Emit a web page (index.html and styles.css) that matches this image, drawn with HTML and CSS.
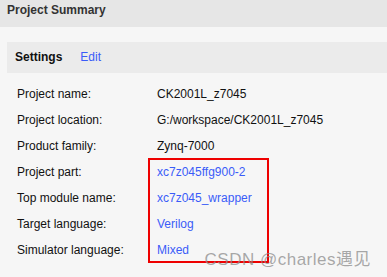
FILE: index.html
```html
<!DOCTYPE html>
<html lang="en">

<head>
    <meta charset="UTF-8">
    <title>Project Summary</title>
    <link rel="stylesheet" href="styles.css">
</head>

<body>

    <div class="title-bar">Project Summary</div>

    <div class="content">
        <div class="section-bar">
            <span class="section-title">Settings</span>
            <a class="link" href="#">Edit</a>
        </div>

        <div class="props">
            <div class="label">Project name:</div>
            <div class="value">CK2001L_z7045</div>
            <div class="label">Project location:</div>
            <div class="value">G:/workspace/CK2001L_z7045</div>
            <div class="label">Product family:</div>
            <div class="value">Zynq-7000</div>
            <div class="label">Project part:</div>
            <div class="value link">xc7z045ffg900-2</div>
            <div class="label">Top module name:</div>
            <div class="value link">xc7z045_wrapper</div>
            <div class="label">Target language:</div>
            <div class="value link">Verilog</div>
            <div class="label">Simulator language:</div>
            <div class="value link">Mixed</div>

            <div class="highlight"></div>
        </div>
    </div>

    <div class="watermark">CSDN @charles遇见</div>

</body>

</html>
```

FILE: styles.css
```css
body {
    margin: 0;
    font-family: "Liberation Sans", Arial, sans-serif;
    font-size: 12px;
    color: #111;
    background: #f6f6f6;
    position: relative;
    height: 277px;
    overflow: hidden;
}

.title-bar {
    background: #e6e6e6;
    color: #333;
    font-weight: bold;
    line-height: 20px;
    height: 27px;
    box-sizing: border-box;
    padding: 0 7px;
}

.content {
    padding: 15px 0 0 7px;
}

.section-bar {
    background: #ebebeb;
    height: 31px;
    line-height: 31px;
    padding-left: 8px;
    display: flex;
    gap: 18px;
}

.section-title {
    font-weight: bold;
    color: #111;
}

.link {
    color: #3a5cf8;
    text-decoration: none;
}

.props {
    position: relative;
    display: grid;
    grid-template-columns: 140px 1fr;
    margin-top: 8px;
    padding-left: 10px;
    line-height: 26px;
}

.highlight {
    position: absolute;
    left: 141px;
    top: 77px;
    width: 121px;
    height: 105px;
    box-sizing: border-box;
    border: 2px solid #ee0000;
}

.watermark {
    position: absolute;
    right: 16px;
    top: 245px;
    font-family: "Liberation Sans", "Noto Sans CJK SC", sans-serif;
    font-size: 17px;
    letter-spacing: 0.5px;
    color: rgba(140, 140, 140, 0.75);
}
```
